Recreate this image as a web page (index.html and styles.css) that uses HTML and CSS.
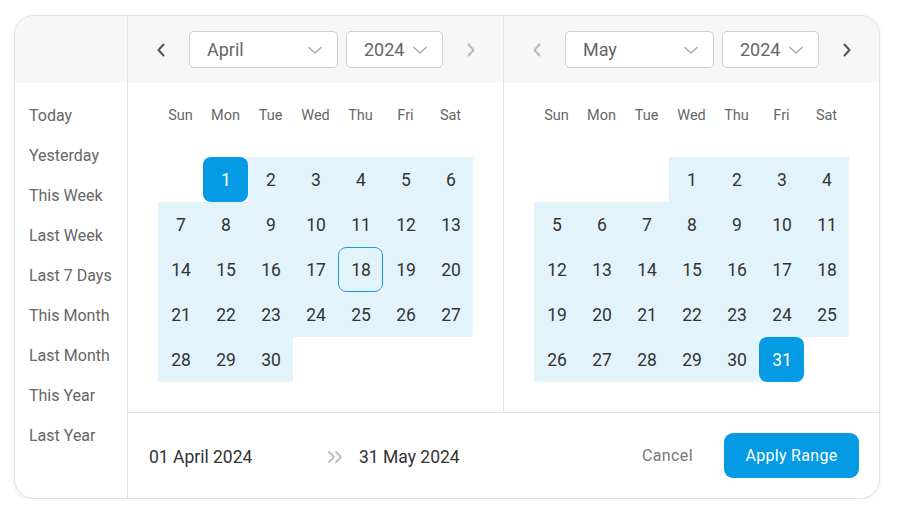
FILE: index.html
```html
<!DOCTYPE html>
<html lang="en">
<head>
<meta charset="utf-8">
<title>Date Range Picker</title>
<link rel="stylesheet" href="styles.css">
</head>
<body>
<div class="card">
  <aside class="sidebar">
    <div class="sidebar-head"></div>
    <ul class="presets">
      <li>Today</li>
      <li>Yesterday</li>
      <li>This Week</li>
      <li>Last Week</li>
      <li>Last 7 Days</li>
      <li>This Month</li>
      <li>Last Month</li>
      <li>This Year</li>
      <li>Last Year</li>
    </ul>
  </aside>
  <main class="main">
    <div class="panels">
      <section class="panel panel-first">
        <div class="panel-head">
          <button class="nav"><svg width="10" height="16" viewBox="0 0 10 16"><path d="M7.5 2.5 L2.5 8 L7.5 13.5" fill="none" stroke="#555" stroke-width="2" stroke-linecap="round" stroke-linejoin="round"/></svg></button>
          <div class="select sel-month"><span>April</span><svg class="caret" width="16" height="10" viewBox="0 0 16 10"><path d="M2 2.5 L8 8 L14 2.5" fill="none" stroke="#aaa" stroke-width="1.6" stroke-linecap="round" stroke-linejoin="round"/></svg></div>
          <div class="select sel-year"><span>2024</span><svg class="caret" width="16" height="10" viewBox="0 0 16 10"><path d="M2 2.5 L8 8 L14 2.5" fill="none" stroke="#aaa" stroke-width="1.6" stroke-linecap="round" stroke-linejoin="round"/></svg></div>
          <button class="nav"><svg width="10" height="16" viewBox="0 0 10 16"><path d="M2.5 2.5 L7.5 8 L2.5 13.5" fill="none" stroke="#bbb" stroke-width="2" stroke-linecap="round" stroke-linejoin="round"/></svg></button>
        </div>
        <div class="panel-body">
          <div class="weekdays"><span>Sun</span><span>Mon</span><span>Tue</span><span>Wed</span><span>Thu</span><span>Fri</span><span>Sat</span></div>
          <div class="days">
            <span class="day empty"></span>
            <span class="day sel">1</span>
            <span class="day rng">2</span><span class="day rng">3</span><span class="day rng">4</span><span class="day rng">5</span><span class="day rng">6</span>
            <span class="day rng">7</span><span class="day rng">8</span><span class="day rng">9</span><span class="day rng">10</span><span class="day rng">11</span><span class="day rng">12</span><span class="day rng">13</span>
            <span class="day rng">14</span><span class="day rng">15</span><span class="day rng">16</span><span class="day rng">17</span><span class="day rng today">18</span><span class="day rng">19</span><span class="day rng">20</span>
            <span class="day rng">21</span><span class="day rng">22</span><span class="day rng">23</span><span class="day rng">24</span><span class="day rng">25</span><span class="day rng">26</span><span class="day rng">27</span>
            <span class="day rng">28</span><span class="day rng">29</span><span class="day rng">30</span>
          </div>
        </div>
      </section>
      <section class="panel">
        <div class="panel-head">
          <button class="nav"><svg width="10" height="16" viewBox="0 0 10 16"><path d="M7.5 2.5 L2.5 8 L7.5 13.5" fill="none" stroke="#bbb" stroke-width="2" stroke-linecap="round" stroke-linejoin="round"/></svg></button>
          <div class="select sel-month"><span>May</span><svg class="caret" width="16" height="10" viewBox="0 0 16 10"><path d="M2 2.5 L8 8 L14 2.5" fill="none" stroke="#aaa" stroke-width="1.6" stroke-linecap="round" stroke-linejoin="round"/></svg></div>
          <div class="select sel-year"><span>2024</span><svg class="caret" width="16" height="10" viewBox="0 0 16 10"><path d="M2 2.5 L8 8 L14 2.5" fill="none" stroke="#aaa" stroke-width="1.6" stroke-linecap="round" stroke-linejoin="round"/></svg></div>
          <button class="nav"><svg width="10" height="16" viewBox="0 0 10 16"><path d="M2.5 2.5 L7.5 8 L2.5 13.5" fill="none" stroke="#555" stroke-width="2" stroke-linecap="round" stroke-linejoin="round"/></svg></button>
        </div>
        <div class="panel-body">
          <div class="weekdays"><span>Sun</span><span>Mon</span><span>Tue</span><span>Wed</span><span>Thu</span><span>Fri</span><span>Sat</span></div>
          <div class="days">
            <span class="day empty"></span><span class="day empty"></span><span class="day empty"></span>
            <span class="day rng">1</span><span class="day rng">2</span><span class="day rng">3</span><span class="day rng">4</span>
            <span class="day rng">5</span><span class="day rng">6</span><span class="day rng">7</span><span class="day rng">8</span><span class="day rng">9</span><span class="day rng">10</span><span class="day rng">11</span>
            <span class="day rng">12</span><span class="day rng">13</span><span class="day rng">14</span><span class="day rng">15</span><span class="day rng">16</span><span class="day rng">17</span><span class="day rng">18</span>
            <span class="day rng">19</span><span class="day rng">20</span><span class="day rng">21</span><span class="day rng">22</span><span class="day rng">23</span><span class="day rng">24</span><span class="day rng">25</span>
            <span class="day rng">26</span><span class="day rng">27</span><span class="day rng">28</span><span class="day rng">29</span><span class="day rng">30</span><span class="day sel">31</span>
          </div>
        </div>
      </section>
    </div>
    <footer class="footer">
      <span class="date-start">01 April 2024</span>
      <svg class="dbl" width="18" height="14" viewBox="0 0 18 14"><path d="M2 2 L7 7 L2 12 M9 2 L14 7 L9 12" fill="none" stroke="#bbb" stroke-width="1.8" stroke-linecap="round" stroke-linejoin="round"/></svg>
      <span class="date-end">31 May 2024</span>
      <span class="spacer"></span>
      <button class="btn-cancel">Cancel</button>
      <button class="btn-apply">Apply Range</button>
    </footer>
  </main>
</div>
</body>
</html>
```

FILE: styles.css
```css
* { box-sizing: border-box; }
html, body { margin: 0; padding: 0; background: #ffffff; }
body { font-family: Roboto, "Liberation Sans", Arial, sans-serif; color: #333; }

.card {
  margin: 15px 0 0 14px;
  width: 866px;
  height: 484px;
  border: 1px solid #e2e2e2;
  border-radius: 20px;
  background: #fff;
  box-shadow: 0 1px 5px rgba(0, 0, 0, 0.07);
  overflow: hidden;
  display: flex;
}

.sidebar {
  width: 113px;
  flex: none;
  border-right: 1px solid #e2e2e2;
  display: flex;
  flex-direction: column;
}
.sidebar-head { height: 67px; background: #f7f7f7; }
.presets { list-style: none; margin: 0; padding: 13px 0 0 14px; }
.presets li {
  height: 40px;
  line-height: 40px;
  font-size: 16px;
  color: #666;
}

.main { flex: 1; display: flex; flex-direction: column; }
.panels { display: flex; }
.panel { width: 375px; flex: none; }
.panel-first { width: 376px; border-right: 1px solid #e2e2e2; }

.panel-head {
  height: 67px;
  background: #f7f7f7;
  display: flex;
  align-items: center;
  padding: 0 16px 0 17px;
}
.nav {
  width: 32px;
  height: 32px;
  border: 0;
  background: transparent;
  padding: 0;
  display: flex;
  align-items: center;
  justify-content: center;
}
.select {
  height: 37px;
  border: 1px solid #cfcfcf;
  border-radius: 5px;
  background: #fff;
  display: flex;
  align-items: center;
  justify-content: space-between;
  font-size: 18px;
  color: #666;
  padding: 0 14px 0 17px;
}
.sel-month { width: 149px; margin-left: 12px; }
.sel-year { width: 97px; margin-left: 8px; margin-right: 12px; }
.caret { flex: none; }

.panel-body { padding: 16px 30px 30px 30px; }
.weekdays {
  display: grid;
  grid-template-columns: repeat(7, 45px);
  height: 32px;
  align-items: center;
  margin-bottom: 26px;
}
.weekdays span { text-align: center; font-size: 14.5px; color: #666; }
.days {
  display: grid;
  grid-template-columns: repeat(7, 45px);
  grid-auto-rows: 45px;
  height: 225px;
}
.day {
  display: flex;
  align-items: center;
  justify-content: center;
  font-size: 17.5px;
  color: #333;
  padding-left: 1px;
}
.rng { background: #e2f3fb; }
.sel { background: #049be4; color: #fff; border-radius: 8px; }
.today { border: 1px solid #1a9be0; border-radius: 8px; }

.footer {
  flex: 1;
  border-top: 1px solid #e2e2e2;
  display: flex;
  align-items: center;
  padding: 0 20px 0 21px;
}
.date-start { width: 178px; font-size: 17.5px; color: #333; margin-top: 3px; }
.dbl { flex: none; margin-right: 14px; margin-top: 3px; }
.date-end { font-size: 17.5px; color: #333; margin-top: 3px; }
.spacer { flex: 1; }
.btn-cancel {
  border: 0;
  background: transparent;
  font-family: inherit;
  font-size: 16px;
  letter-spacing: 0.4px;
  color: #777;
  padding: 0;
  margin-right: 31px;
}
.btn-apply {
  width: 135px;
  height: 45px;
  border: 0;
  border-radius: 9px;
  background: #049be4;
  color: #fff;
  font-family: inherit;
  font-size: 16px;
  letter-spacing: 0.3px;
  padding: 0;
}
```
